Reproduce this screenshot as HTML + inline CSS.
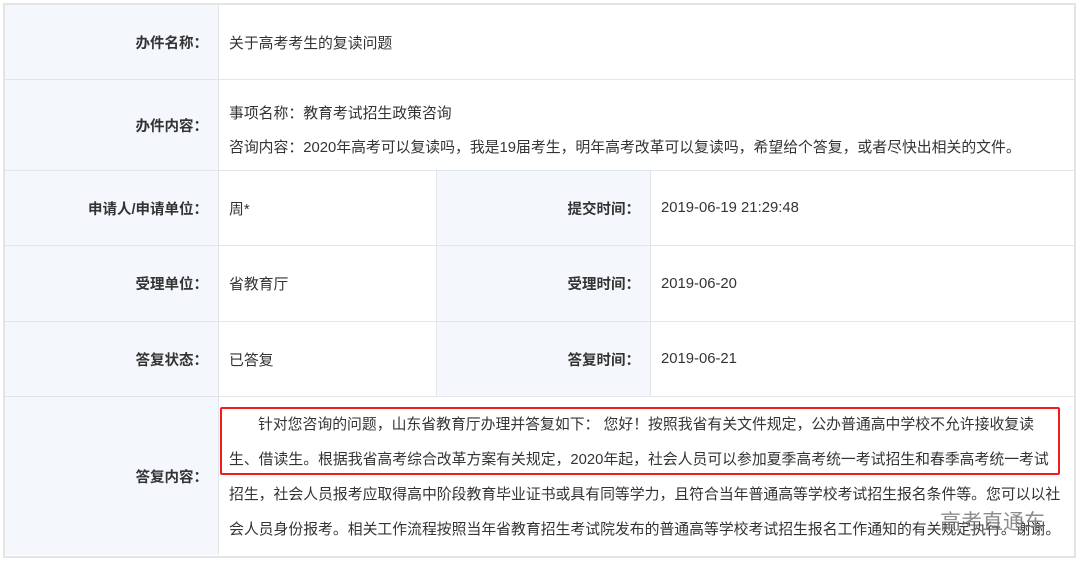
<!DOCTYPE html>
<html><head><meta charset="utf-8"><style>
body{margin:0;width:1080px;height:562px;background:#fff;font-family:"Liberation Sans","Noto Sans CJK SC",sans-serif;font-size:14.85px;color:#333;position:relative;overflow:hidden}
.b{position:absolute;box-sizing:border-box}
.l{background:#f4f8fc;font-weight:bold;text-align:right;padding-right:10px;display:flex;align-items:center;justify-content:flex-end;color:#333;font-size:14.5px}
.v{display:flex;align-items:center;padding-left:10px}
</style></head><body>
<div class="b" style="left:3px;top:3px;width:1073px;height:555px;border:2px solid #e2e4e6;background:#fff"></div>
<div class="b l" style="left:5px;top:5px;width:213px;height:74px">办件名称：</div>
<div class="b l" style="left:5px;top:80px;width:213px;height:90px">办件内容：</div>
<div class="b l" style="left:5px;top:171px;width:213px;height:74px">申请人/申请单位：</div>
<div class="b l" style="left:5px;top:246px;width:213px;height:75px">受理单位：</div>
<div class="b l" style="left:5px;top:322px;width:213px;height:74px">答复状态：</div>
<div class="b l" style="left:5px;top:397px;width:213px;height:158px">答复内容：</div>
<div class="b l" style="left:437px;top:171px;width:213px;height:74px">提交时间：</div>
<div class="b l" style="left:437px;top:246px;width:213px;height:75px">受理时间：</div>
<div class="b l" style="left:437px;top:322px;width:213px;height:74px">答复时间：</div>
<div class="b" style="left:218px;top:5px;width:1px;height:550px;background:#e2e6ea"></div>
<div class="b" style="left:436px;top:171px;width:1px;height:225px;background:#e2e6ea"></div>
<div class="b" style="left:650px;top:171px;width:1px;height:225px;background:#e2e6ea"></div>
<div class="b" style="left:5px;top:79px;width:1069px;height:1px;background:#e2e6ea"></div>
<div class="b" style="left:5px;top:170px;width:1069px;height:1px;background:#e2e6ea"></div>
<div class="b" style="left:5px;top:245px;width:1069px;height:1px;background:#e2e6ea"></div>
<div class="b" style="left:5px;top:321px;width:1069px;height:1px;background:#e2e6ea"></div>
<div class="b" style="left:5px;top:396px;width:1069px;height:1px;background:#e2e6ea"></div>
<div class="b v" style="left:219px;top:5px;width:855px;height:74px">关于高考考生的复读问题</div>
<div class="b" style="left:229px;top:97px;width:845px;line-height:34px;white-space:nowrap">事项名称：教育考试招生政策咨询<br>咨询内容：2020年高考可以复读吗，我是19届考生，明年高考改革可以复读吗，希望给个答复，或者尽快出相关的文件。</div>
<div class="b v" style="left:219px;top:171px;width:217px;height:74px">周*</div>
<div class="b v" style="left:219px;top:246px;width:217px;height:75px">省教育厅</div>
<div class="b v" style="left:219px;top:322px;width:217px;height:74px">已答复</div>
<div class="b v" style="left:651px;top:171px;width:420px;height:74px">2019-06-19 21:29:48</div>
<div class="b v" style="left:651px;top:246px;width:420px;height:75px">2019-06-20</div>
<div class="b v" style="left:651px;top:322px;width:420px;height:74px">2019-06-21</div>
<div class="b" style="left:229px;top:408px;width:845px;line-height:35px;white-space:nowrap"><span style="padding-left:29px"></span>针对您咨询的问题，山东省教育厅办理并答复如下： 您好！按照我省有关文件规定，公办普通高中学校不允许接收复读<br>生、借读生。根据我省高考综合改革方案有关规定，2020年起，社会人员可以参加夏季高考统一考试招生和春季高考统一考试<br>招生，社会人员报考应取得高中阶段教育毕业证书或具有同等学力，且符合当年普通高等学校考试招生报名条件等。您可以以社<br>会人员身份报考。相关工作流程按照当年省教育招生考试院发布的普通高等学校考试招生报名工作通知的有关规定执行。谢谢。</div>
<div class="b" style="left:220px;top:407px;width:840px;height:68px;border:2px solid #f21c1c;border-radius:2px"></div>
<div class="b" style="left:940px;top:506px;font-size:21px;color:#777;opacity:.85">高考直通车</div>
</body></html>
